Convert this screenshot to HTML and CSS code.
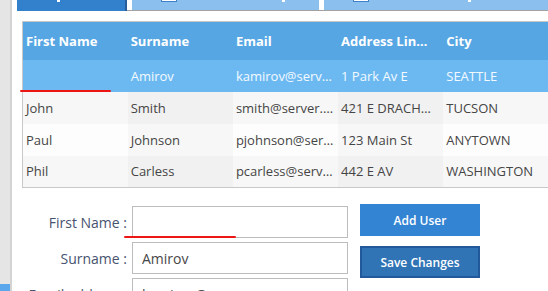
FILE: index.html
```html
<!DOCTYPE html>
<html lang="en">
<head>
<meta charset="utf-8">
<title>Users</title>
<link rel="stylesheet" href="styles.css">
</head>
<body>
<div class="app">
  <aside class="rail"><span class="rail-active"></span></aside>
  <main class="content">
    <nav class="tabs">
      <div class="tab tab-active"><span class="tab-mark mark-first"></span></div>
      <div class="tab"><span class="tab-icon"></span><span class="tab-mark mark-second"></span></div>
      <div class="tab"><span class="tab-icon"></span><span class="tab-mark mark-third"></span></div>
    </nav>

    <table class="grid">
      <thead>
        <tr>
          <th>First Name</th>
          <th>Surname</th>
          <th>Email</th>
          <th>Address Lin…</th>
          <th>City</th>
        </tr>
      </thead>
      <tbody>
        <tr class="selected">
          <td></td>
          <td>Amirov</td>
          <td>kamirov@serv…</td>
          <td>1 Park Av E</td>
          <td>SEATTLE</td>
        </tr>
        <tr class="striped">
          <td>John</td>
          <td>Smith</td>
          <td>smith@server.…</td>
          <td>421 E DRACH…</td>
          <td>TUCSON</td>
        </tr>
        <tr>
          <td>Paul</td>
          <td>Johnson</td>
          <td>pjohnson@ser…</td>
          <td>123 Main St</td>
          <td>ANYTOWN</td>
        </tr>
        <tr class="striped">
          <td>Phil</td>
          <td>Carless</td>
          <td>pcarless@serv…</td>
          <td>442 E AV</td>
          <td>WASHINGTON</td>
        </tr>
      </tbody>
    </table>

    <section class="editor">
      <div class="fields">
        <label class="field"><span class="field-label">First Name :</span><input class="field-input" type="text" value=""></label>
        <label class="field"><span class="field-label">Surname :</span><input class="field-input" type="text" value="Amirov"></label>
        <label class="field"><span class="field-label">Email address :</span><input class="field-input" type="text" value="kamirov@server.com"></label>
      </div>
      <div class="actions">
        <button class="btn btn-add" type="button">Add User</button>
        <button class="btn btn-save" type="button">Save Changes</button>
      </div>
    </section>
  </main>

  <span class="ink ink-grid"></span>
  <span class="ink ink-form"></span>
</div>
</body>
</html>
```

FILE: styles.css
```css
* { box-sizing: border-box; }

html, body {
  margin: 0;
  padding: 0;
  height: 100%;
  overflow: hidden;
  background: #ffffff;
  font-family: "Open Sans", "Noto Sans", sans-serif;
}

.app {
  position: relative;
  display: flex;
  height: 291px;
}

.rail {
  width: 12px;
  flex: none;
  background: #e5e5e5;
  border-right: 2px solid #d3d3d3;
  display: flex;
  flex-direction: column;
  justify-content: flex-end;
}

.rail-active {
  display: block;
  height: 7px;
  background: #5aa7ec;
}

.content {
  flex: 1;
  min-width: 0;
  padding-left: 5px;
}

/* tabs */
.tabs {
  display: flex;
  gap: 5px;
  height: 11px;
  border-bottom: 1px solid #a2a2a2;
}

.tab {
  height: 10px;
  background: #8bbfee;
  display: flex;
  align-items: flex-start;
}

.tab:nth-child(2) { width: 187px; }
.tab:nth-child(3) { flex: 1; }

.tab-active {
  width: 110px;
  height: 11px;
  background: #3381cd;
  border-right: 2px solid #2a5d9c;
}

.tab-icon {
  width: 16px;
  height: 2px;
  margin-left: 29px;
  background: #ffffff;
  border: 1px solid #3d7fc8;
  border-top: none;
}

.tab-mark {
  width: 3px;
  height: 2px;
  background: #ffffff;
}

.mark-first { margin-left: 40px; }
.mark-second { margin-left: 105px; }
.mark-third { margin-left: 99px; }

/* grid */
.grid {
  margin: 10px 0 0 5px;
  border-collapse: collapse;
  table-layout: fixed;
  width: 527px;
  border: 1px solid #c8c8c8;
  font-size: 13px;
}

.grid th,
.grid td {
  width: 105px;
  padding: 0 3px;
  text-align: left;
  white-space: nowrap;
  overflow: hidden;
}

.grid th {
  height: 38px;
  background: #56a6e3;
  color: #ffffff;
  font-weight: 700;
}

.grid td {
  height: 32px;
  color: #454545;
  background: #fdfdfd;
}

.grid td:nth-child(even) { background: #f7f7f7; }

.grid tr.striped td { background: #f7f7f7; }
.grid tr.striped td:nth-child(even) { background: #f1f1f1; }

.grid tr.selected td {
  background: #6cb9f1;
  color: #f4faff;
}

/* editor */
.editor {
  display: flex;
  margin: 16px 0 0 5px;
}

.fields {
  display: flex;
  flex-direction: column;
  gap: 4px;
  padding-top: 2px;
}

.field {
  display: flex;
  align-items: center;
  gap: 5px;
}

.field-label {
  width: 105px;
  text-align: right;
  font-size: 14px;
  color: #47536f;
  white-space: nowrap;
}

.field-input {
  width: 216px;
  height: 32px;
  margin: 0;
  border: 1px solid #bdbdbd;
  padding: 0 0 0 9px;
  font-family: inherit;
  font-size: 14px;
  color: #474747;
  background: #ffffff;
  outline: none;
}

.actions {
  display: flex;
  flex-direction: column;
  gap: 10px;
  margin-left: 12px;
}

.btn {
  width: 120px;
  height: 32px;
  margin: 0;
  font-family: inherit;
  font-size: 12px;
  font-weight: 600;
  color: #ffffff;
  cursor: pointer;
}

.btn-add {
  background: #3484d4;
  border: none;
}

.btn-save {
  background: #3074b6;
  border: 2px solid #21599a;
}

/* hand-drawn annotation strokes */
.ink {
  position: absolute;
  height: 2px;
  background: #ee1515;
  border-radius: 1px;
}

.ink-grid { left: 20px; top: 90px; width: 91px; }
.ink-form { left: 124px; top: 236px; width: 112px; }
```
